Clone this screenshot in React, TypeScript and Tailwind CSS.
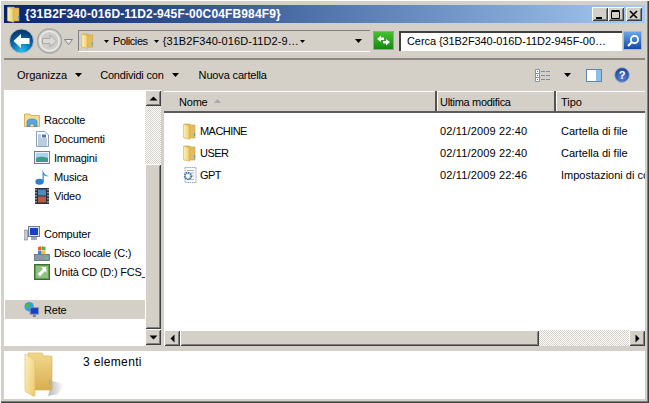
import React from "react";

const Tri = ({ w = 7, h = 4, cls = "", color = "#000" }: { w?: number; h?: number; cls?: string; color?: string }) => (
  <svg width={w} height={h} viewBox={`0 0 ${w} ${h}`} className={`shrink-0 ${cls}`}>
    <polygon points={`0,0 ${w},0 ${w / 2},${h}`} fill={color} />
  </svg>
);

const Folder = ({ id, w = 13, h = 17, cls = "" }: { id: string; w?: number; h?: number; cls?: string }) => (
  <svg width={w} height={h} viewBox="0 0 13 17" className={`shrink-0 ${cls}`}>
    <defs>
      <linearGradient id={id} x1="0" y1="0" x2="1" y2="0">
        <stop offset="0" stopColor="#fff3b8" />
        <stop offset="0.7" stopColor="#f3d67e" />
        <stop offset="1" stopColor="#e0b450" />
      </linearGradient>
    </defs>
    <path d="M1 1 H7 L8 2 H12 V15 H1 Z" fill="#e3bc5c" stroke="#c79f45" strokeWidth="0.6" />
    <path d="M0.5 1.2 L6.8 3 V16.4 L0.5 14.6 Z" fill={`url(#${id})`} stroke="#d6ae52" strokeWidth="0.5" />
    <rect x="11" y="10" width="1.2" height="3" fill="#5aa0d8" />
  </svg>
);

const BigFolder = () => (
  <svg width="40" height="46" viewBox="0 0 40 46" className="shrink-0">
    <defs>
      <linearGradient id="bf" x1="0" y1="0" x2="1" y2="0.6">
        <stop offset="0" stopColor="#fdf1c0" />
        <stop offset="1" stopColor="#f0cf78" />
      </linearGradient>
      <linearGradient id="bb" x1="0" y1="0" x2="0" y2="1">
        <stop offset="0" stopColor="#f2d98c" />
        <stop offset="1" stopColor="#d9ae52" />
      </linearGradient>
      <linearGradient id="bs" x1="0" y1="0" x2="1" y2="0">
        <stop offset="0" stopColor="#b8b8b8" />
        <stop offset="1" stopColor="#ffffff" />
      </linearGradient>
    </defs>
    <path d="M28 30 L40 33 L34 43 L24 45 Z" fill="url(#bs)" />
    <path d="M4 2 H18 L20 5 H27 Q28 5 28 6 V38 Q28 39 27 39 H8 Z" fill="url(#bb)" stroke="#d2ab58" strokeWidth="0.6" />
    <path d="M1 3 L10 8 Q11 8.5 11 10 L11 44 Q11 46 9 45 L2 41 Q1 40.5 1 39 Z" fill="url(#bf)" stroke="#dcbb6c" strokeWidth="0.6" />
    <rect x="25" y="29" width="1.4" height="5" fill="#7fb4dc" />
  </svg>
);

const Bevel = "shadow-[inset_1px_1px_0_#ffffff,inset_-1px_-1px_0_#404040,inset_2px_2px_0_#d4d0c8,inset_-2px_-2px_0_#808080]";

const WinBtn = ({ kind }: { kind: "min" | "max" | "close" }) => (
  <div className={`w-[16px] h-[14px] bg-[#d4d0c8] flex items-center justify-center ${Bevel}`}>
    <svg width="10" height="9" viewBox="0 0 10 9">
      {kind === "min" && <rect x="1" y="7" width="6" height="2" fill="#000" />}
      {kind === "max" && <path d="M0.5 1.5 H8.5 V8.5 H0.5 Z M0.5 0.5 H8.5" fill="none" stroke="#000" strokeWidth="1" />}
      {kind === "close" && <path d="M1 1 L8 8 M8 1 L1 8" stroke="#000" strokeWidth="1.6" fill="none" />}
    </svg>
  </div>
);

const ScrollBtn = ({ dir }: { dir: "up" | "down" | "left" | "right" }) => (
  <div className={`w-[16px] h-[16px] shrink-0 bg-[#d4d0c8] flex items-center justify-center ${Bevel}`}>
    <svg width="9" height="9" viewBox="0 0 9 9">
      {dir === "up" && <polygon points="0.5,6.5 8.5,6.5 4.5,2.5" fill="#000" />}
      {dir === "down" && <polygon points="0.5,2.5 8.5,2.5 4.5,6.5" fill="#000" />}
      {dir === "left" && <polygon points="6.5,0.5 6.5,8.5 2.5,4.5" fill="#000" />}
      {dir === "right" && <polygon points="2.5,0.5 2.5,8.5 6.5,4.5" fill="#000" />}
    </svg>
  </div>
);

const Dither = "bg-[repeating-conic-gradient(#d4d0c8_0_25%,#ffffff_0_50%)] bg-[length:2px_2px]";

const NavRow = ({ icon, label, indent, selected }: { icon?: React.ReactNode; label?: string; indent?: boolean; selected?: boolean }) => (
  <div className={`h-[19px] flex items-center overflow-hidden whitespace-nowrap ${selected ? "bg-[#d4d0c8] ml-[1px]" : ""} ${indent ? "pl-[30px]" : selected ? "pl-[19px]" : "pl-[20px]"}`}>
    {icon && <span className="w-[16px] h-[16px] flex items-center justify-center shrink-0">{icon}</span>}
    {label && <span className="ml-[4px] pt-[2px] tracking-[-0.2px]">{label}</span>}
  </div>
);

const IcoLibrary = () => (
  <svg width="16" height="14" viewBox="0 0 16 14">
    <path d="M0.5 1 H6 L7 2.5 H15.5 V13.5 H0.5 Z" fill="#f5dc94" stroke="#c9a24c" strokeWidth="0.8" />
    <path d="M3 13.5 V9 Q3 6 8 6 Q13 6 13 9 V13.5 H10 V11 H6 V13.5 Z" fill="#5aa6e0" stroke="#2f78b8" strokeWidth="0.6" />
  </svg>
);
const IcoDoc = () => (
  <svg width="13" height="16" viewBox="0 0 13 16">
    <path d="M0.5 0.5 H9 L12.5 4 V15.5 H0.5 Z" fill="#fbfcfe" stroke="#8fa0b4" strokeWidth="1" />
    <path d="M2 4 H5 M2 6 H5 M2 8 H11 M2 10 H11 M2 12 H11 M2 14 H11" stroke="#7d9cc0" strokeWidth="1" />
    <rect x="6" y="3.5" width="4" height="3" fill="#3c78b4" />
  </svg>
);
const IcoImg = () => (
  <svg width="16" height="13" viewBox="0 0 16 13">
    <rect x="0.5" y="0.5" width="15" height="12" fill="#eef2f6" stroke="#6f7f90" />
    <rect x="2" y="2" width="12" height="9" fill="#a8d4ee" />
    <path d="M2 7 Q7 4.5 14 7 V11 H2 Z" fill="#3f9a8c" />
  </svg>
);
const IcoMusic = () => (
  <svg width="14" height="16" viewBox="0 0 14 16">
    <ellipse cx="4.5" cy="12.8" rx="4.2" ry="3" fill="#2a7fd0" />
    <path d="M7.5 13 V0.5 Q9 6 13.5 7 Q10.5 8 8.8 6 V13 Z" fill="#3a90e0" />
  </svg>
);
const IcoVideo = () => (
  <svg width="14" height="16" viewBox="0 0 14 16">
    <rect x="0" y="0" width="14" height="16" fill="#2c3038" />
    <path d="M1 1 V15 M13 1 V15" stroke="#c8d0d8" strokeWidth="1.2" strokeDasharray="1.5 1.5" />
    <rect x="3" y="1.5" width="8" height="6" fill="#4a8cc0" />
    <rect x="3" y="8.5" width="8" height="6" fill="#b85a4a" />
  </svg>
);
const IcoComputer = () => (
  <svg width="16" height="15" viewBox="0 0 16 15">
    <rect x="0" y="4" width="3.5" height="10" fill="#c4ccd4" stroke="#70808c" strokeWidth="0.6" />
    <rect x="4.5" y="0.5" width="11" height="10" fill="#dde3ea" stroke="#6f7c8a" />
    <rect x="6" y="2" width="8" height="7" fill="#1640c8" />
    <rect x="7" y="11" width="6" height="3" fill="#a0a8b0" />
  </svg>
);
const IcoDisk = () => (
  <svg width="16" height="16" viewBox="0 0 16 16">
    <rect x="0.5" y="9.5" width="15" height="6" fill="#8a98a6" stroke="#5a6874" strokeWidth="0.8" />
    <rect x="12" y="12" width="2" height="1.5" fill="#50e060" />
    <path d="M4 2 L7.5 1.2 V5 L4 5.6 Z" fill="#e85a30" />
    <path d="M8 1.2 L11.5 2 V5.6 L8 5 Z" fill="#5cb040" />
    <path d="M4 6 L7.5 5.4 V9 L4 9.6 Z" fill="#3a80d8" />
    <path d="M8 5.4 L11.5 6 V9.6 L8 9 Z" fill="#f0c030" />
  </svg>
);
const IcoCd = () => (
  <svg width="16" height="16" viewBox="0 0 16 16">
    <rect x="0.5" y="0.5" width="15" height="15" fill="#5ea04a" stroke="#3c6c30" />
    <rect x="2" y="2" width="12" height="12" fill="#90c080" />
    <path d="M12 3 H7 L9 5 L3.5 10 L6 12.5 L11 7 L12.8 9 Z" fill="#fff" />
  </svg>
);
const IcoNet = () => (
  <svg width="17" height="17" viewBox="0 0 17 17">
    <circle cx="5.5" cy="5.5" r="5" fill="#2fa0d8" />
    <path d="M2 3 Q5 1 6 4 Q4 8 2 6 Z M7 6 L10 7 L7 10 Z" fill="#4cb848" />
    <rect x="6.5" y="6.5" width="9" height="7" fill="#1640c8" stroke="#8c98a6" />
    <rect x="9.5" y="14" width="3" height="2.5" fill="#76828e" />
  </svg>
);
const IcoGpt = () => (
  <svg width="15" height="16" viewBox="0 0 15 16">
    <path d="M3 0.5 H14 V15.5 H3 Z" fill="#f8f9fb" stroke="#9aa4b0" strokeDasharray="1.5 0.7" />
    <path d="M5 3.5 H12 M9 6 H12 M10 9 H12 M5 12.5 H12" stroke="#b0b8c4" />
    <circle cx="6" cy="9" r="3.2" fill="none" stroke="#4a78a8" strokeWidth="2" strokeDasharray="1.5 0.6" />
    <circle cx="6" cy="9" r="1.3" fill="#fff" />
  </svg>
);

const FileRow = ({ icon, name, date, type, pad }: { icon: React.ReactNode; name: string; date: string; type: string; pad: string }) => (
  <div className="h-[22px] flex items-center whitespace-nowrap">
    <span className={`w-[36px] flex items-center shrink-0 ${pad}`}>{icon}</span>
    <span className="w-[240px] shrink-0 tracking-[-0.55px]">{name}</span>
    <span className="w-[121px] shrink-0 tracking-[0.15px]">{date}</span>
    <span>{type}</span>
  </div>
);

export default function App() {
  return (
    <div className="w-[649px] h-[403px] flex flex-col pt-[5px] px-[4px] pb-[4px] bg-[#d4d0c8] overflow-hidden shadow-[inset_1px_1px_0_#ffffff,inset_-1px_-1px_0_#404040,inset_-2px_-2px_0_#808080] text-black text-[11px] leading-[13px] font-['Liberation_Sans',Arial,sans-serif]">
      {/* Title bar */}
      <div className="h-[18px] shrink-0 flex items-center bg-gradient-to-r from-[#0a246a] to-[#a6caf0] pr-[3px]">
        <Folder id="f0" w={13} h={17} cls="ml-[3px]" />
        <span className="ml-[5px] text-white font-bold text-[12px] tracking-[0.13px]">{"{31B2F340-016D-11D2-945F-00C04FB984F9}"}</span>
        <div className="ml-auto flex items-center">
          <WinBtn kind="min" />
          <WinBtn kind="max" />
          <div className="w-[2px]" />
          <WinBtn kind="close" />
        </div>
      </div>

      {/* Navigation bar */}
      <div className="h-[37px] shrink-0 flex items-center pl-[5px] pr-[3px] border-b-2 border-[#8c8983]">
        <svg width="25" height="26" viewBox="0 0 25 26" className="shrink-0">
          <defs>
            <radialGradient id="bk" cx="0.5" cy="0.9" r="0.8">
              <stop offset="0" stopColor="#25c0ee" />
              <stop offset="0.6" stopColor="#0a62a8" />
              <stop offset="1" stopColor="#083a70" />
            </radialGradient>
          </defs>
          <circle cx="12.5" cy="13" r="12" fill="url(#bk)" stroke="#b4bcc4" />
          <path d="M4.5 13 L12 6 V10 H20.5 V16 H12 V20 Z" fill="#fff" />
        </svg>
        <svg width="25" height="26" viewBox="0 0 25 26" className="ml-[3px] shrink-0">
          <circle cx="12.5" cy="13" r="12" fill="#d9d8d4" stroke="#a6a6a4" strokeWidth="1.5" />
          <circle cx="12.5" cy="13" r="9.5" fill="#cfcdc8" stroke="#f4f4f2" />
          <path d="M19.5 13 L13 7 V10.5 H5.5 V15.5 H13 V19 Z" fill="#dadada" stroke="#a0a0a0" strokeWidth="0.8" />
        </svg>
        <svg width="9" height="6" viewBox="0 0 9 6" className="ml-[2px] mt-[2px] shrink-0">
          <path d="M0.5 0.5 H8.5 L4.5 5.5 Z" fill="#e8e8e8" stroke="#808080" />
        </svg>
        <div className="ml-[5px] w-[292px] h-[21px] flex items-center border-l border-t border-[#808080] shadow-[0_1px_0_#ffffff] pl-[2px] whitespace-nowrap">
          <Folder id="f1" w={13} h={16} />
          <Tri w={5} h={3} cls="ml-[10px]" />
          <span className="ml-[4px] tracking-[-0.4px]">Policies</span>
          <Tri w={5} h={3} cls="ml-[6px]" />
          <span className="ml-[4px] tracking-[0.08px]">{"{31B2F340-016D-11D2-9…"}</span>
          <Tri w={5} h={3} cls="ml-auto mr-[65px]" />
        </div>
        <Tri w={7} h={4} cls="-ml-[15px]" />
        <div className="ml-[11px] w-[21px] h-[19px] shrink-0 flex items-center justify-center border border-[#a0a0a0] bg-gradient-to-b from-[#44c030] to-[#148a10]">
          <svg width="15" height="13" viewBox="0 0 15 13">
            <path d="M1 5 L5 1.5 V3.5 H8 V6 H5 V8 Z M14 8 L10 11.5 V9.5 H7 V7 H10 V5 Z" fill="#fff" />
          </svg>
        </div>
        <div className="ml-[5px] w-[223px] h-[20px] shrink-0 flex items-center bg-white border-l-2 border-t-2 border-[#404040] pl-[6px] whitespace-nowrap overflow-hidden tracking-[-0.08px]">
          {"Cerca {31B2F340-016D-11D2-945F-00…"}
        </div>
        <div className="ml-[1px] w-[19px] h-[19px] shrink-0 flex items-center justify-center border border-[#b0b8c4] bg-gradient-to-b from-[#6aa8e8] to-[#1048a8]">
          <svg width="14" height="14" viewBox="0 0 14 14">
            <circle cx="8.5" cy="5.5" r="3.6" fill="none" stroke="#fff" strokeWidth="1.8" />
            <path d="M6 8 L2 12" stroke="#fff" strokeWidth="2.2" />
          </svg>
        </div>
      </div>

      {/* Toolbar */}
      <div className="h-[30px] shrink-0 flex items-center pl-[13px] pr-[15px] whitespace-nowrap">
        <span>Organizza</span>
        <Tri cls="ml-[8px]" />
        <span className="ml-[18px] tracking-[-0.2px]">Condividi con</span>
        <Tri cls="ml-[8px]" />
        <span className="ml-[20px] tracking-[-0.15px]">Nuova cartella</span>
        <svg width="15" height="13" viewBox="0 0 15 13" className="ml-auto">
          <path d="M0.5 0.5 H4.5 V12.5 H0.5 Z M0.5 4.5 H4.5 M0.5 8.5 H4.5" fill="#fff" stroke="#7d95b4" />
          <rect x="2" y="2" width="1" height="1" fill="#3878b8" />
          <rect x="2" y="6" width="1" height="1" fill="#c83030" />
          <rect x="2" y="10" width="1" height="1" fill="#3878b8" />
          <path d="M6 2.5 H10 M11 2.5 H15 M6 6.5 H10 M11 6.5 H15 M6 10.5 H10 M11 10.5 H15" stroke="#7d8ca0" />
        </svg>
        <Tri cls="ml-[14px]" />
        <svg width="16" height="13" viewBox="0 0 16 13" className="ml-[15px]">
          <rect x="0.5" y="0.5" width="15" height="12" fill="#fff" stroke="#5e86ae" />
          <rect x="10" y="1" width="5" height="11" fill="#8cc0e4" />
        </svg>
        <svg width="16" height="16" viewBox="0 0 16 16" className="ml-[12px]">
          <defs>
            <radialGradient id="hp" cx="0.5" cy="0.7" r="0.7">
              <stop offset="0" stopColor="#5a88d8" />
              <stop offset="1" stopColor="#1a3c90" />
            </radialGradient>
          </defs>
          <circle cx="8" cy="8" r="7.4" fill="url(#hp)" stroke="#a8b4c8" />
          <text x="8" y="12" textAnchor="middle" fontSize="11" fontWeight="700" fill="#fff" fontFamily="Liberation Sans, sans-serif">?</text>
        </svg>
      </div>

      {/* Main */}
      <div className="flex-1 min-h-0 flex">
        <div className="w-[141px] shrink-0 bg-white overflow-hidden pt-[1px]">
          <NavRow />
          <NavRow icon={<IcoLibrary />} label="Raccolte" />
          <NavRow indent icon={<IcoDoc />} label="Documenti" />
          <NavRow indent icon={<IcoImg />} label="Immagini" />
          <NavRow indent icon={<IcoMusic />} label="Musica" />
          <NavRow indent icon={<IcoVideo />} label="Video" />
          <NavRow />
          <NavRow icon={<IcoComputer />} label="Computer" />
          <NavRow indent icon={<IcoDisk />} label="Disco locale (C:)" />
          <NavRow indent icon={<IcoCd />} label="Unità CD (D:) FCS_" />
          <NavRow />
          <NavRow selected icon={<IcoNet />} label="Rete" />
        </div>
        <div className="w-[16px] shrink-0 flex flex-col pb-[1px]">
          <ScrollBtn dir="up" />
          <div className={`h-[58px] shrink-0 ${Dither}`} />
          <div className={`flex-1 bg-[#d4d0c8] ${Bevel}`} />
          <ScrollBtn dir="down" />
        </div>
        <div className="w-[3px] shrink-0" />
        <div className="flex-1 min-w-0 flex flex-col">
          <div className="h-[23px] shrink-0 flex items-center whitespace-nowrap border-t border-t-[#d4d0c8] border-b-2 border-b-[#5c5c5c] shadow-[inset_0_1px_0_#ffffff]">
            <div className="w-[273px] h-full flex items-center pl-[15px] pt-[3px] shrink-0 border-r-2 border-r-[#55534e]">
              <span className="tracking-[-0.2px]">Nome</span>
              <svg width="7" height="4" viewBox="0 0 7 4" className="ml-[6px] mb-[3px]"><polygon points="0,4 7,4 3.5,0" fill="#a8a8a8" /></svg>
            </div>
            <div className="w-[119px] h-full flex items-center pl-[2px] pt-[3px] shrink-0 border-r-2 border-r-[#55534e] border-l border-l-white tracking-[-0.3px]">Ultima modifica</div>
            <div className="pl-[4px] pt-[3px] border-l border-l-white h-full flex items-center">Tipo</div>
          </div>
          <div className="flex-1 min-h-0 bg-white pt-[7px] overflow-hidden">
            <FileRow pad="pl-[19px]" icon={<Folder id="f2" />} name="MACHINE" date="02/11/2009 22:40" type="Cartella di file" />
            <FileRow pad="pl-[19px]" icon={<Folder id="f3" />} name="USER" date="02/11/2009 22:40" type="Cartella di file" />
            <FileRow pad="pl-[18px]" icon={<IcoGpt />} name="GPT" date="02/11/2009 22:46" type="Impostazioni di co" />
          </div>
          <div className="h-[16px] shrink-0 flex">
            <ScrollBtn dir="left" />
            <div className={`w-[359px] shrink-0 bg-[#d4d0c8] ${Bevel}`} />
            <div className={`flex-1 ${Dither}`} />
            <ScrollBtn dir="right" />
          </div>
        </div>
      </div>

      {/* Status */}
      <div className="h-[5px] shrink-0" />
      <div className="h-[48px] shrink-0 bg-white flex items-start pl-[20px]">
        <BigFolder />
        <span className="ml-[19px] mt-[5px] text-[12px] tracking-[0.35px]">3 elementi</span>
      </div>
    </div>
  );
}
